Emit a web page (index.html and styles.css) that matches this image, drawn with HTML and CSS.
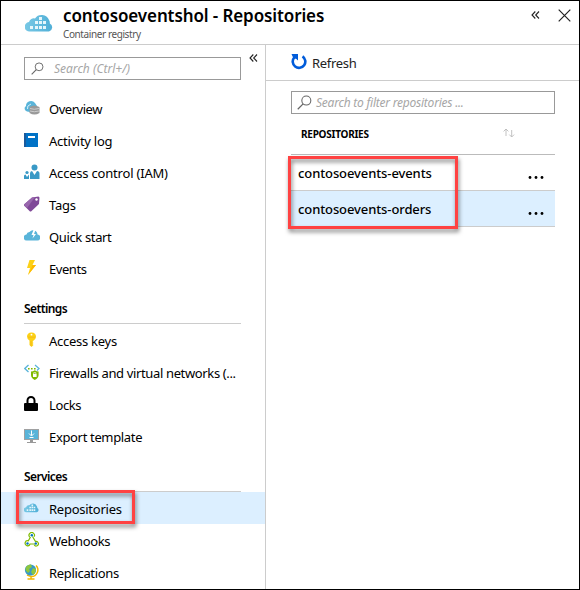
FILE: index.html
```html
<!DOCTYPE html>
<html lang="en">
<head>
<meta charset="utf-8">
<title>contosoeventshol - Repositories</title>
<link rel="stylesheet" href="styles.css">
</head>
<body>
<svg width="0" height="0" class="defs" aria-hidden="true">
  <defs>
    <linearGradient id="sky" x1="0" x2="1"><stop offset="0" stop-color="#78c8e5"/><stop offset="1" stop-color="#50afd7"/></linearGradient>
    <symbol id="registry" viewBox="0 0 28 19">
      <path d="M5 18.500A4.700 4.700 0 0 1 4 9a5 5 0 0 1 6-3.500A8 8 0 0 1 24 7q1 1.500.8 3.500A4.300 4.300 0 0 1 24 18.500Z" fill="url(#sky)"/>
      <path d="M14 4h3v3h-3zM10 8h3v3h-3zM14 8h3v3h-3zM18 8h3v3h-3zM5 13h3v3H5zM10 13h3v3h-3zM14 13h3v3h-3zM18 13h3v3h-3z" fill="#e5f6fb"/>
    </symbol>
    <symbol id="chevrons" viewBox="0 0 9 8"><path d="M4.300.5 1 4l3.300 3.500M8 .5 4.700 4 8 7.500" fill="none" stroke="#222" stroke-width="1.100"/></symbol>
    <symbol id="lens" viewBox="0 0 14 14"><circle cx="8.700" cy="5.200" r="4.200" fill="none" stroke="#666"/><path d="M5.700 8.300.7 13.300" stroke="#666" stroke-width="1.200"/></symbol>
  </defs>
</svg>
<div class="blade">
  <header class="top">
    <svg class="logo"><use href="#registry"/></svg>
    <div class="titles"><h1>contosoeventshol - Repositories</h1><p>Container registry</p></div>
    <svg class="collapse"><use href="#chevrons"/></svg>
    <svg class="close" viewBox="0 0 13 13"><path d="m.7.7 11.600 11.600M12.300.7.7 12.300" stroke="#222" stroke-width="1.200"/></svg>
  </header>
  <div class="main">
    <nav class="side">
      <div class="side-search">
        <div class="field"><svg class="lens small"><use href="#lens"/></svg><span>Search (Ctrl+/)</span></div>
        <svg class="fold"><use href="#chevrons"/></svg>
      </div>
      <a class="item"><svg viewBox="0 0 16 16"><path d="M3 11.500A3 3 0 0 1 2 6a5 5 0 0 1 9-3l2 3-7 6z" fill="#59b4d9"/><path d="M3.500 9q-1-3.500 3.500-5" fill="none" stroke="#d5eef8"/><path d="M5.500 7q4.500-3 10 0v6q-5 3-10 0z" fill="#999"/><path d="M6 8.500q4 1.500 9 0M6 11q4 1.500 9 0" fill="none" stroke="#ccc"/></svg><span class="t-overview">Overview</span></a>
      <a class="item"><svg viewBox="0 0 16 16"><path d="M0 1h14v14H0z" fill="#0072c6"/><path d="M0 1h2v14H0z" fill="#1b5a9c"/><path d="M4 4h7v2H4z" fill="#fff"/></svg><span class="t-activity">Activity log</span></a>
      <a class="item"><svg viewBox="0 0 16 16"><g fill="#3999c6"><circle cx="10.500" cy="3.500" r="3"/><path d="M6 15V9.500Q6 7 8 7l2.500 4L13 7q2.500 0 2.500 2.500V15z"/><circle cx="3" cy="8.500" r="1.600"/><path d="M0 15v-3q0-1.500 1.500-1.500L3 13l2-2.500V15z"/></g></svg><span class="t-access">Access control (IAM)</span></a>
      <a class="item"><svg viewBox="0 0 16 16"><path d="m0 8.500 8-7 6.500-1 1 1L15 8l-8 7.500H6L0 9.500z" fill="#804998"/><path d="m0 8.500 8-7 3-.4L3 12 0 9.500z" fill="#9867ad"/><circle cx="12.500" cy="3.500" r="1.200" fill="#fff"/></svg><span class="t-tags">Tags</span></a>
      <a class="item"><svg viewBox="0 0 16 16"><path d="M3 12.500a3 3 0 0 1-.5-6A3 3 0 0 1 5.500 4a4.500 4.500 0 0 1 8 2.500 3 3 0 0 1-.5 6z" fill="#59b4d9"/><path d="M9.500 2 7.500 7h2l-1 3.500 3.500-4.500h-2l1.500-4z" fill="#fff"/></svg><span class="t-quick">Quick start</span></a>
      <a class="item"><svg viewBox="0 0 16 16"><path d="M5.500 0H11L8.500 5H12L4 15l2-7H3z" fill="#fcd116"/><path d="M8.500 5H12L4 15l3-6z" fill="#ffb900"/></svg><span class="t-events">Events</span></a>

      <h2><span>Settings</span></h2>
      <a class="item"><svg viewBox="0 0 16 16"><path d="M7.500 0.500C4.500.5 3 2.500 3 4.500q0 2.500 2.500 4V13L7.500 15l2-2-1-1 1-1-1-1 1-1.500Q12 7 12 4.500c0-2-1.500-4-4.500-4z" fill="#fcd116"/><path d="M4 5.200h7.500M7 9v5" stroke="#f2b51a" stroke-width=".8"/><circle cx="7.500" cy="2.700" r=".9" fill="#fff"/></svg><span class="t-keys">Access keys</span></a>
      <a class="item"><svg viewBox="0 0 16 16"><path d="M4.500 1 .8 4.500 4.500 8M11 1l4 3.500-2 2" fill="none" stroke="#59b4d9" stroke-width="1.300"/><path d="M4 3.900h1.600v1.600H4zM7 3.900h1.600v1.600H7zM10 3.900h1.600v1.600H10z" fill="#7fba00"/><path d="M7 7.500q2 0 3.800-1.200 1.800 1.200 3.800 1.200V11q0 3-3.800 5Q7 14 7 11z" fill="#7fba00"/><path d="M9 10h3.600v3H9z" fill="#fff"/><path d="M9.700 10V8.700h2.200V10" fill="none" stroke="#fff" stroke-width=".7"/></svg><span class="t-fire">Firewalls and virtual networks (...</span></a>
      <a class="item"><svg viewBox="0 0 16 16"><path d="M3.500 8V4.500a3.500 3.500 0 0 1 7 0V8" fill="none" stroke="#000" stroke-width="2"/><rect x="0" y="7" width="14" height="8" rx="1" fill="#000"/></svg><span class="t-locks">Locks</span></a>
      <a class="item"><svg viewBox="0 0 16 16"><path d="M0 1h15v11H0z" fill="#a0a1a2"/><path d="M1 2h13v9H1z" fill="#59b4d9"/><path d="M6 12h3v2h3v1H3v-1h3z" fill="#999"/><path d="M7.500 2.500v5M5 5.500 7.500 8 10 5.500M5.500 9.500h4" fill="none" stroke="#fff"/></svg><span class="t-export">Export template</span></a>

      <h2><span>Services</span></h2>
      <a class="item selected"><svg class="repo-icon"><use href="#registry"/></svg><span class="t-repos">Repositories</span><i class="callout nav-callout"></i></a>
      <a class="item"><svg viewBox="0 0 16 16"><g fill="none" stroke="#7fba00" stroke-width="1.200"><path d="M5.700 5a2.700 2.700 0 1 1 4.300-.3M8.500 4.500l3 5a2.300 2.300 0 1 1-1.300 3.500M6.500 5 4.300 8.800A2.500 2.500 0 1 0 6 12h5"/></g><g fill="#0072c6"><circle cx="7.800" cy="3.300" r="1.200"/><circle cx="3.500" cy="11.500" r="1.200"/><circle cx="11.800" cy="11.500" r="1.200"/></g></svg><span class="t-hooks">Webhooks</span></a>
      <a class="item"><svg viewBox="0 0 16 16"><path d="M12 1.500a6.500 6.500 0 0 1-5 11L3 11M7 12v2.500M3.500 15h7" fill="none" stroke="#f5b800" stroke-width="1.500"/><circle cx="6.500" cy="6" r="5.600" fill="#3999c6"/><path d="M2 3q2-3 5-2.500L8 3 5 5l1 2-2 2-2.500-3zM9 4l3 1q0 4-3 6L7 8z" fill="#8cc63f"/></svg><span class="t-repl">Replications</span></a>
    </nav>
    <section class="content">
      <div class="toolbar">
        <svg class="refresh" viewBox="0 0 16 16"><path d="M11.500 2.300A6.300 6.300 0 1 1 3.200 3.500" fill="none" stroke="#015cda" stroke-width="2.600"/><path d="M.5 0H7v6.500L5 4.700 2.500 4.500z" fill="#015cda"/></svg>
        <span>Refresh</span>
      </div>
      <div class="body">
        <div class="field"><svg class="lens"><use href="#lens"/></svg><span>Search to filter repositories ...</span></div>
        <div class="table">
          <div class="head"><span>REPOSITORIES</span><svg class="sort" viewBox="0 0 12 10"><path d="M3 8V1M.6 3.400 3 1l2.400 2.400M8.700 2v7M6.300 6.600 8.700 9l2.400-2.400" fill="none" stroke="#bbb" stroke-width=".9"/></svg></div>
          <div class="row"><span>contosoevents-events</span><svg class="dots" viewBox="0 0 16 3"><circle cx="2" cy="1.500" r="1.400"/><circle cx="8" cy="1.500" r="1.400"/><circle cx="14" cy="1.500" r="1.400"/></svg></div>
          <div class="row active"><span>contosoevents-orders</span><svg class="dots" viewBox="0 0 16 3"><circle cx="2" cy="1.500" r="1.400"/><circle cx="8" cy="1.500" r="1.400"/><circle cx="14" cy="1.500" r="1.400"/></svg></div>
          <i class="callout table-callout"></i>
        </div>
      </div>
    </section>
  </div>
</div>
</body>
</html>
```
FILE: styles.css
```css
* { box-sizing: border-box; }
body { margin: 0; font-family: "Noto Sans", "Open Sans", sans-serif; font-size: 13px; color: #000; background: #fff; }
svg { display: block; flex: none; }
span { white-space: nowrap; }
.defs { position: absolute; }
.blade { width: 580px; height: 590px; border: 1px solid #000; display: flex; flex-direction: column; overflow: hidden; }
.top { height: 44px; flex: none; border-bottom: 1px solid #ccc; display: flex; align-items: flex-start; padding-left: 24px; }
.logo { width: 28px; height: 19px; margin-top: 12px; }
.titles { margin-left: 10px; width: 468px; }
h1 { margin: 3px 0 0; font-size: 17px; line-height: 24px; font-weight: 600; white-space: nowrap; letter-spacing: -.11px; }
p { margin: -1px 0 0; font-size: 10px; line-height: 14px; color: #555; letter-spacing: -.4px; }
.collapse { width: 9px; height: 8px; margin-top: 10px; }
.close { width: 13px; height: 13px; margin: 8px 0 0 18px; }
.main { flex: 1; display: flex; min-height: 0; }
.side { width: 265px; flex: none; border-right: 1px solid #ccc; }
.side-search { height: 47px; padding: 12px 0 0 23px; display: flex; }
.field { height: 23px; border: 1px solid #999; display: flex; align-items: center; font-style: italic; color: #a6a6a6; font-size: 12px; }
.side-search .field { width: 217px; padding-left: 6px; gap: 10px; }
.lens { width: 15px; height: 15px; }
.lens.small { width: 13px; height: 13px; }
.fold { width: 9px; height: 8px; margin: -3px 0 0 8px; }
.item { height: 32px; display: flex; align-items: center; padding: 1px 0 0 23px; gap: 10px; position: relative; }
.item > svg { width: 16px; height: 16px; margin-top: -2px; margin-right: -1px; }
.item > svg.repo-icon { width: 15px; height: 11px; margin-right: 0; }
.t-overview { letter-spacing: -.47px; }
.t-activity { letter-spacing: -.27px; }
.t-access { letter-spacing: -.2px; }
.t-tags { letter-spacing: -.25px; }
.t-quick { letter-spacing: -.36px; }
.t-events { letter-spacing: -.45px; }
.t-keys { letter-spacing: -.27px; }
.t-fire { letter-spacing: -.36px; }
.t-locks { letter-spacing: -.4px; }
.t-export { letter-spacing: -.34px; }
.t-repos { letter-spacing: -.25px; }
.t-hooks { letter-spacing: -.37px; }
.t-repl { letter-spacing: -.33px; }
h2 { margin: 0 24px 0 23px; height: 40px; border-bottom: 1px solid #ccc; padding-top: 16px; font-size: 12px; line-height: 18px; font-weight: 600; letter-spacing: -.6px; }
.selected, .active { background: #dcefff; }
.content { flex: 1; min-width: 0; }
.toolbar { height: 36px; border-bottom: 1px solid #ccc; display: flex; align-items: center; padding-left: 25px; gap: 5px; color: #222; letter-spacing: -.3px; }
.refresh { width: 16px; height: 16px; margin-top: -1px; }
.body { padding: 10px 24px 0 25px; }
.body .field { padding-left: 5px; gap: 4px; letter-spacing: -.23px; }
.table { position: relative; }
.head { height: 41px; border-bottom: 1px solid #bbb; display: flex; align-items: center; padding-left: 10px; justify-content: space-between; font-size: 10px; font-weight: 700; letter-spacing: -.25px; }
.sort { width: 12px; height: 10px; margin-right: 40px; margin-top: -2px; }
.row { height: 36px; border-bottom: 1px solid #ccc; display: flex; align-items: center; justify-content: space-between; padding: 0 11px 0 7px; font-weight: 500; letter-spacing: -.1px; }
.dots { width: 16px; height: 3px; margin-top: 9px; }
.callout { position: absolute; border: 3px solid #ff4242; filter: drop-shadow(1px 3px 2px rgba(0,0,0,.5)); }
.nav-callout { left: 15px; top: -2px; width: 119px; height: 34px; z-index: 1; }
.table-callout { left: -3px; top: 42px; width: 170px; height: 73px; }
```
